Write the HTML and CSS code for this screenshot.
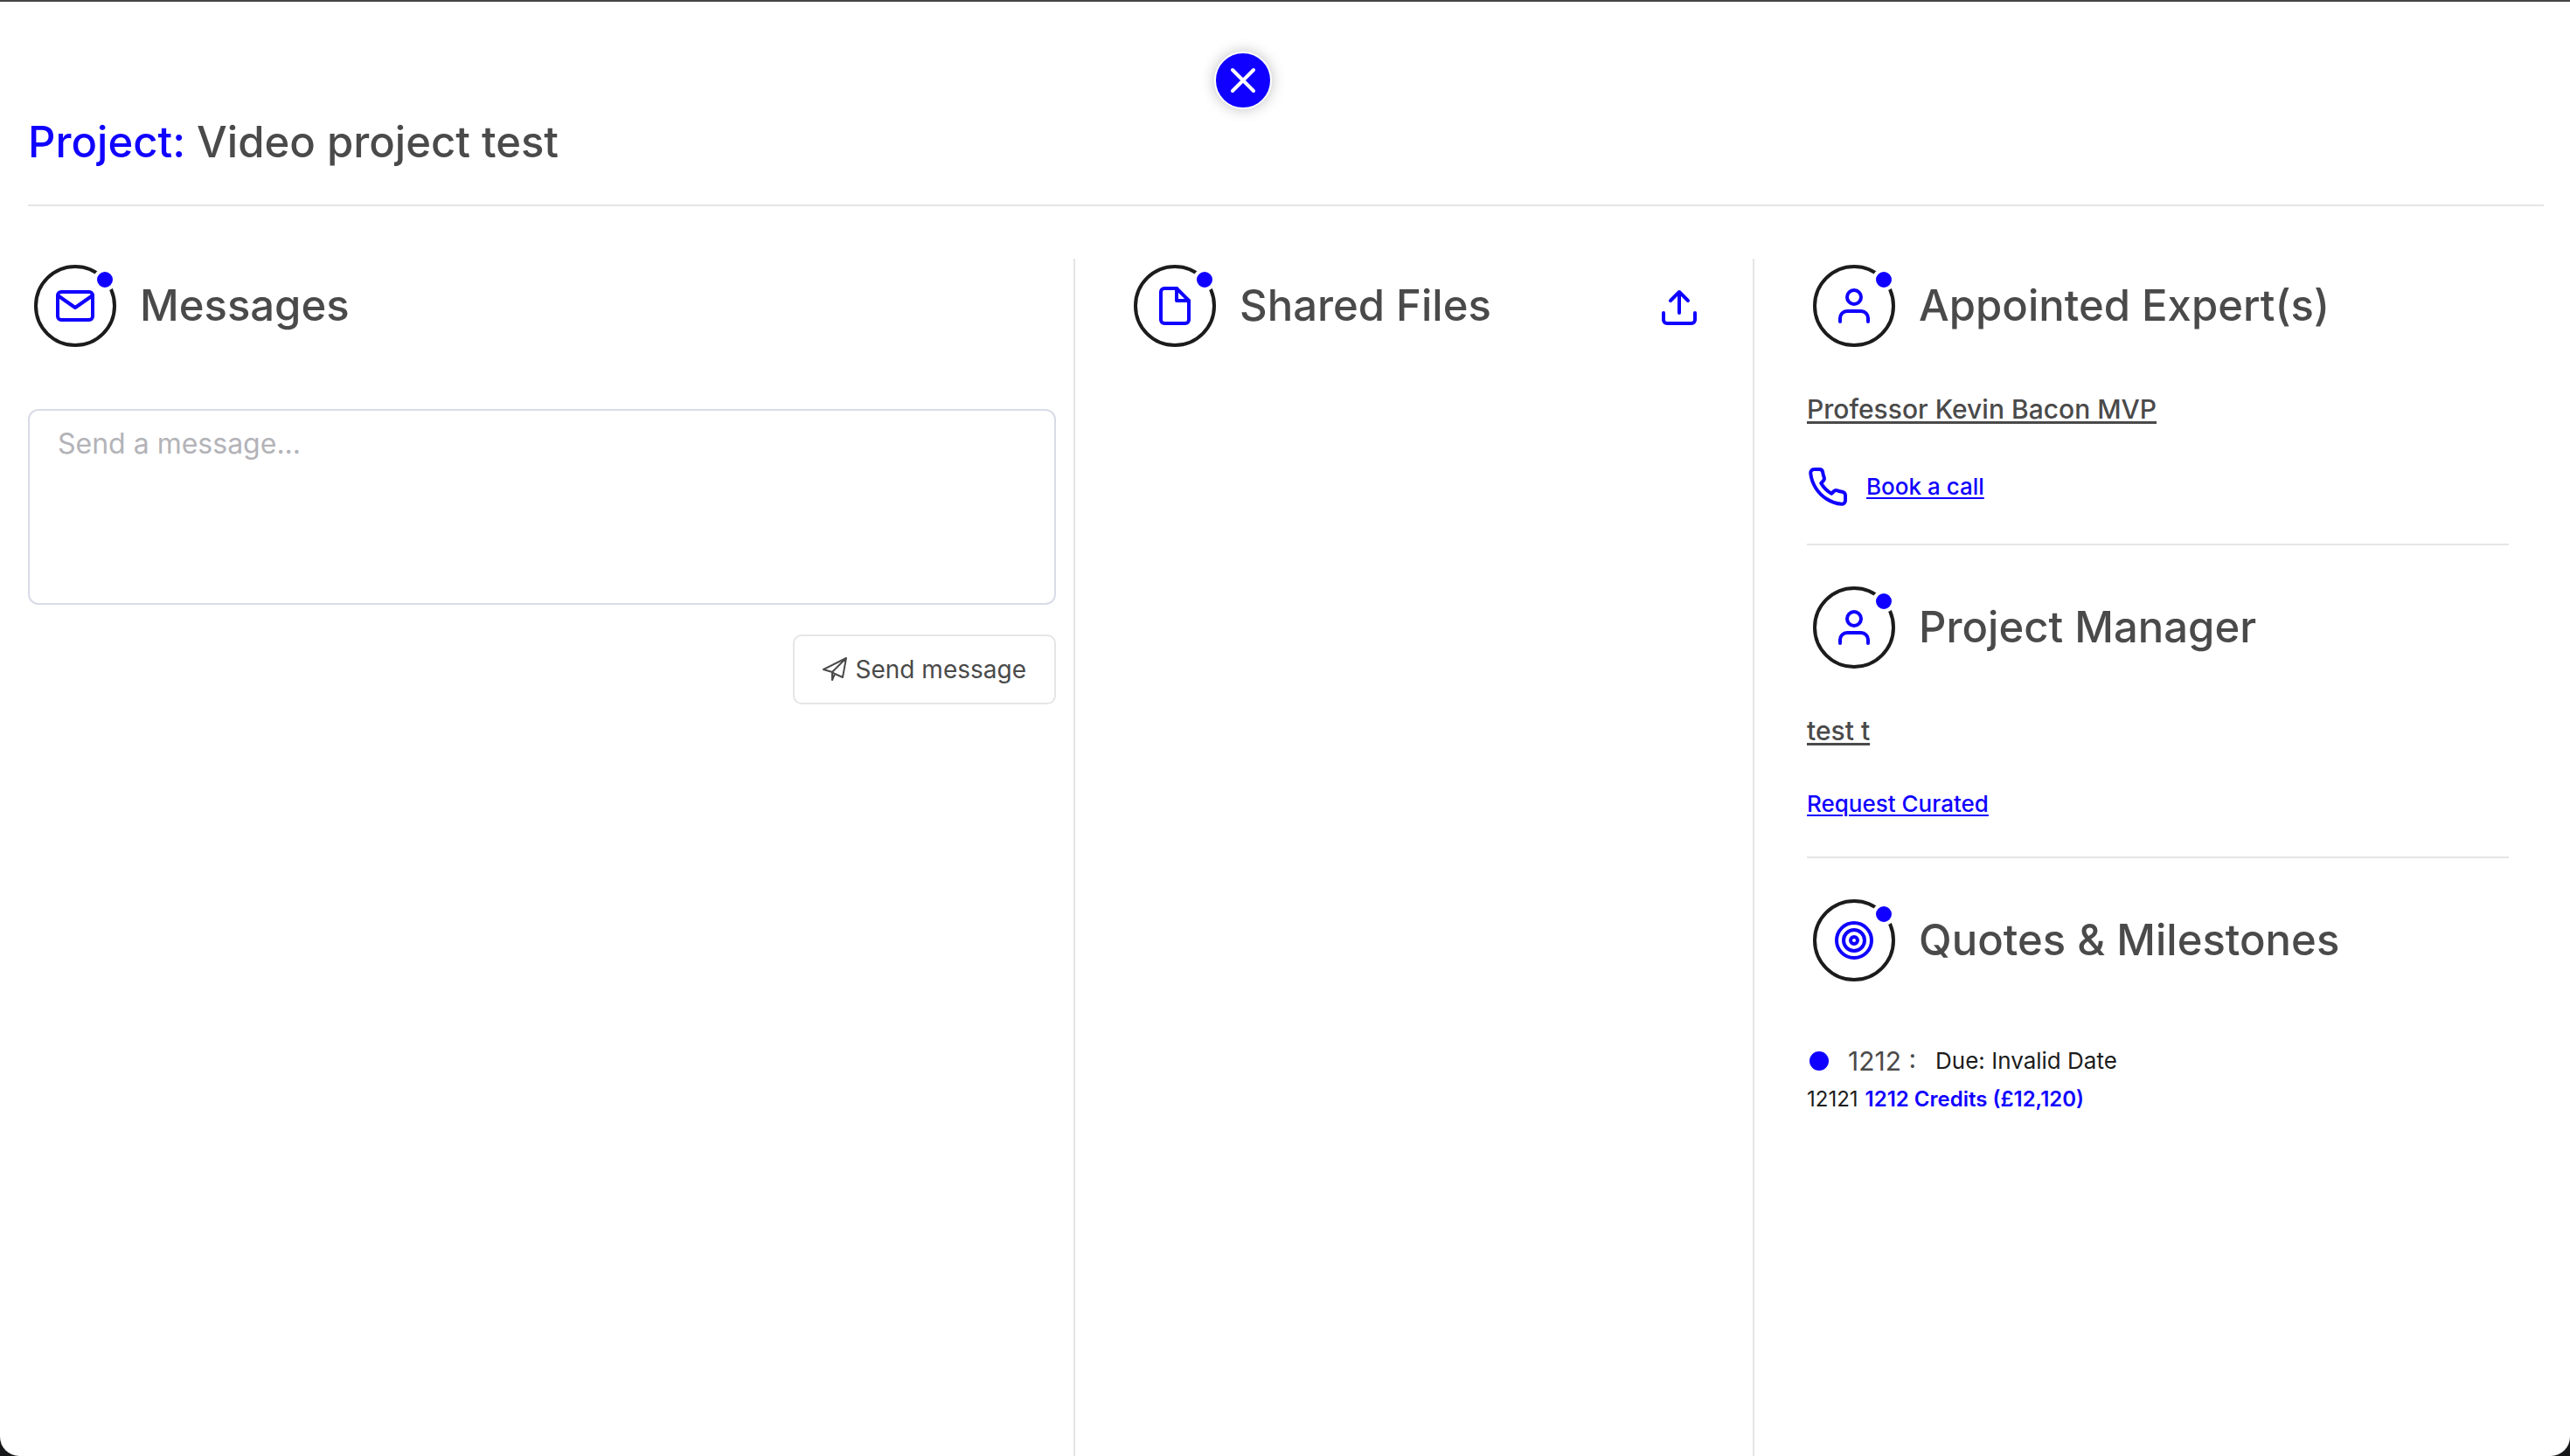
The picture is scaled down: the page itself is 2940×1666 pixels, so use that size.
FILE: index.html
```html
<!DOCTYPE html>
<html lang="en">
<head>
<meta charset="utf-8">
<meta name="viewport" content="width=device-width, initial-scale=1">
<title>Project: Video project test</title>
<link rel="stylesheet" href="styles.css">
</head>
<body>
<svg class="sprite" aria-hidden="true">
  <symbol id="ring" viewBox="0 0 108 108">
    <circle cx="54" cy="54" r="45" fill="none" stroke="#1c1c1c" stroke-width="4"/>
    <circle cx="88" cy="24" r="11" fill="#1000ff" stroke="#fff" stroke-width="4"/>
  </symbol>
  <symbol id="user" viewBox="0 0 24 24">
    <path d="M20 21v-2a4 4 0 0 0-4-4H8a4 4 0 0 0-4 4v2"/><circle cx="12" cy="7" r="4"/>
  </symbol>
</svg>
<main class="panel">
  <div class="close-bar">
    <button class="close" type="button" aria-label="Close">
      <svg viewBox="0 0 30 30"><path d="M3 3l24 24M27 3L3 27"/></svg>
    </button>
  </div>
  <h1 class="title"><span class="accent">Project:</span> Video project test</h1>

  <div class="columns">
    <section class="column messages">
      <header class="head">
        <span class="badge"><svg class="badge-ring"><use href="#ring"/></svg><svg class="icon" viewBox="0 0 24 24"><path d="M4 4h16c1.100 0 2 .9 2 2v12c0 1.100-.9 2-2 2H4c-1.100 0-2-.9-2-2V6c0-1.100.9-2 2-2z"/><path d="M22 6l-10 7L2 6"/></svg></span>
        <h2>Messages</h2>
      </header>
      <form class="composer">
        <textarea class="field" aria-label="Message" placeholder="Send a message..."></textarea>
        <button class="send" type="button">
          <svg class="plane" viewBox="0 0 28 28"><path d="M1 14L27 1l-4 22-9-4-3 7V17zM27 1L11 17l3 2"/></svg>
          Send message
        </button>
      </form>
    </section>

    <section class="column files">
      <header class="head">
        <span class="badge"><svg class="badge-ring"><use href="#ring"/></svg><svg class="icon" viewBox="0 0 24 24"><path d="M13 2H6a2 2 0 0 0-2 2v16a2 2 0 0 0 2 2h12a2 2 0 0 0 2-2V9z"/><path d="M13 2v7h7"/></svg></span>
        <h2>Shared Files</h2>
        <button class="upload" type="button" aria-label="Upload file"><svg class="icon" viewBox="0 0 24 24"><path d="M21 15v4a2 2 0 0 1-2 2H5a2 2 0 0 1-2-2v-4M17 8l-5-5-5 5M12 3v12"/></svg></button>
      </header>
    </section>

    <div class="column people">
      <section class="block">
        <header class="head">
          <span class="badge"><svg class="badge-ring"><use href="#ring"/></svg><svg class="icon"><use href="#user"/></svg></span>
          <h2>Appointed Expert(s)</h2>
        </header>
        <a class="name" href="#">Professor Kevin Bacon MVP</a>
        <div class="call">
          <svg class="icon" viewBox="0 0 24 24"><path d="M22 16.920v3a2 2 0 0 1-2.180 2 19.790 19.790 0 0 1-8.630-3.070 19.500 19.500 0 0 1-6-6 19.790 19.790 0 0 1-3.070-8.670A2 2 0 0 1 4.110 2h3a2 2 0 0 1 2 1.720 12.840 12.840 0 0 0 .7 2.810 2 2 0 0 1-.45 2.110L8.090 9.910a16 16 0 0 0 6 6l1.270-1.270a2 2 0 0 1 2.110-.45 12.840 12.840 0 0 0 2.810.7A2 2 0 0 1 22 16.920z"/></svg>
          <a class="action" href="#">Book a call</a>
        </div>
      </section>
      <section class="block">
        <header class="head">
          <span class="badge"><svg class="badge-ring"><use href="#ring"/></svg><svg class="icon"><use href="#user"/></svg></span>
          <h2>Project Manager</h2>
        </header>
        <a class="name" href="#">test t</a>
        <a class="action" href="#">Request Curated</a>
      </section>
      <section class="block">
        <header class="head">
          <span class="badge"><svg class="badge-ring"><use href="#ring"/></svg><svg class="icon" viewBox="0 0 24 24"><circle cx="12" cy="12" r="10"/><circle cx="12" cy="12" r="6"/><circle cx="12" cy="12" r="2"/></svg></span>
          <h2>Quotes &amp; Milestones</h2>
        </header>
        <div class="milestone">
          <p class="line"><span class="dot"></span><span class="milestone-name">1212 :</span><span>Due: Invalid Date</span></p>
          <p class="line amount">12121<span class="credits">1212 Credits (£12,120)</span></p>
        </div>
      </section>
    </div>
  </div>
</main>
</body>
</html>
```
FILE: styles.css
```css
* { box-sizing: border-box; }

body {
  margin: 0;
  background: #17181a;
  color: #1c1c1c;
  font: 26px/40px Inter, "Liberation Sans", sans-serif;
}

h1, h2, p { margin: 0; }
button { font: inherit; cursor: pointer; }
a { color: inherit; }

.sprite { display: none; }

.panel {
  display: flex;
  flex-direction: column;
  min-height: 100vh;
  padding: 0 30px 0 32px;
  border-top: 2px solid #464446;
  border-radius: 0 0 22px 22px;
  background: #fff;
}

.close-bar {
  display: flex;
  justify-content: center;
  padding: 57px 98px 0 0;
}

.close {
  display: grid;
  place-items: center;
  width: 66px;
  height: 66px;
  padding: 0;
  border: 2px solid #fff;
  border-radius: 50%;
  background: #1000ff;
  box-shadow: 0 0 16px rgba(0, 0, 0, .25);
}

.close svg {
  width: 30px;
  height: 30px;
  fill: none;
  stroke: #fff;
  stroke-width: 4;
  stroke-linecap: round;
}

.title {
  padding: 3px 0 37px;
  border-bottom: 2px solid #e5e5e5;
  color: #4a4a4a;
  font-size: 49px;
  line-height: 69px;
  font-weight: 500;
}

.accent { color: #1000ff; }

.columns {
  flex: 1;
  display: grid;
  grid-template-columns: 1198fr 777fr 903fr;
  margin-top: 60px;
}

.column + .column { padding-left: 60px; }
.messages { padding-right: 20px; }
.files { padding-right: 60px; }
.people { padding-right: 40px; }
.messages, .files { border-right: 2px solid #e5e5e5; }

.head {
  display: flex;
  align-items: center;
  gap: 20px;
  height: 108px;
}

.head h2 {
  color: #4a4a4a;
  font-size: 49px;
  line-height: 60px;
  font-weight: 500;
}

.badge {
  display: grid;
  place-items: center;
  width: 108px;
  height: 108px;
}

.badge > * { grid-area: 1 / 1; }
.badge-ring { width: 108px; height: 108px; }

.icon {
  flex: none;
  width: 48px;
  height: 48px;
  fill: none;
  stroke: #1000ff;
  stroke-width: 2;
  stroke-linecap: round;
  stroke-linejoin: round;
}

.upload {
  display: flex;
  margin: 4px 0 0 auto;
  padding: 0;
  border: 0;
  background: none;
}

.composer {
  display: flex;
  flex-direction: column;
  align-items: flex-end;
  gap: 34px;
  margin-top: 64px;
}

.field {
  width: 100%;
  height: 224px;
  padding: 18px 32px;
  border: 2px solid #d9dbe8;
  border-radius: 12px;
  background: #fff;
  color: #4a4a4a;
  font: 32px/40px Inter, "Liberation Sans", sans-serif;
  resize: none;
}

.field::placeholder { color: #b3b3b8; opacity: 1; }

.send {
  display: flex;
  align-items: center;
  gap: 10px;
  height: 80px;
  padding: 0 32px;
  border: 2px solid #e5e5e5;
  border-radius: 10px;
  background: #fff;
  color: #4a4a4a;
  font-size: 28px;
}

.plane {
  width: 28px;
  height: 28px;
  fill: none;
  stroke: #4a4a4a;
  stroke-width: 2;
  stroke-linejoin: round;
}

.block {
  display: flex;
  flex-direction: column;
  align-items: flex-start;
  gap: 44px;
}

.block + .block {
  align-self: stretch;
  margin-top: 40px;
  padding-top: 40px;
  border-top: 2px solid #e5e5e5;
}

.name {
  color: #4a4a4a;
  font-size: 30px;
  font-weight: 500;
  text-decoration-thickness: 3px;
  text-underline-offset: 3px;
  text-decoration-skip-ink: none;
}

.action {
  color: #1000ff;
  font-weight: 500;
  text-decoration-thickness: 2px;
  text-underline-offset: 3px;
}

.call {
  display: flex;
  align-items: center;
  gap: 20px;
  height: 50px;
}

.milestone { padding-top: 18px; }

.line {
  display: flex;
  align-items: center;
  gap: 12px;
  line-height: 44px;
}

.dot {
  width: 22px;
  height: 22px;
  margin: 0 10px 0 3px;
  border-radius: 50%;
  background: #1000ff;
}

.milestone-name {
  margin-right: 10px;
  color: #4a4a4a;
  font-size: 30px;
}

.amount {
  align-items: baseline;
  gap: 8px;
  font-size: 24px;
}

.credits { color: #1000ff; font-weight: 600; }
```
